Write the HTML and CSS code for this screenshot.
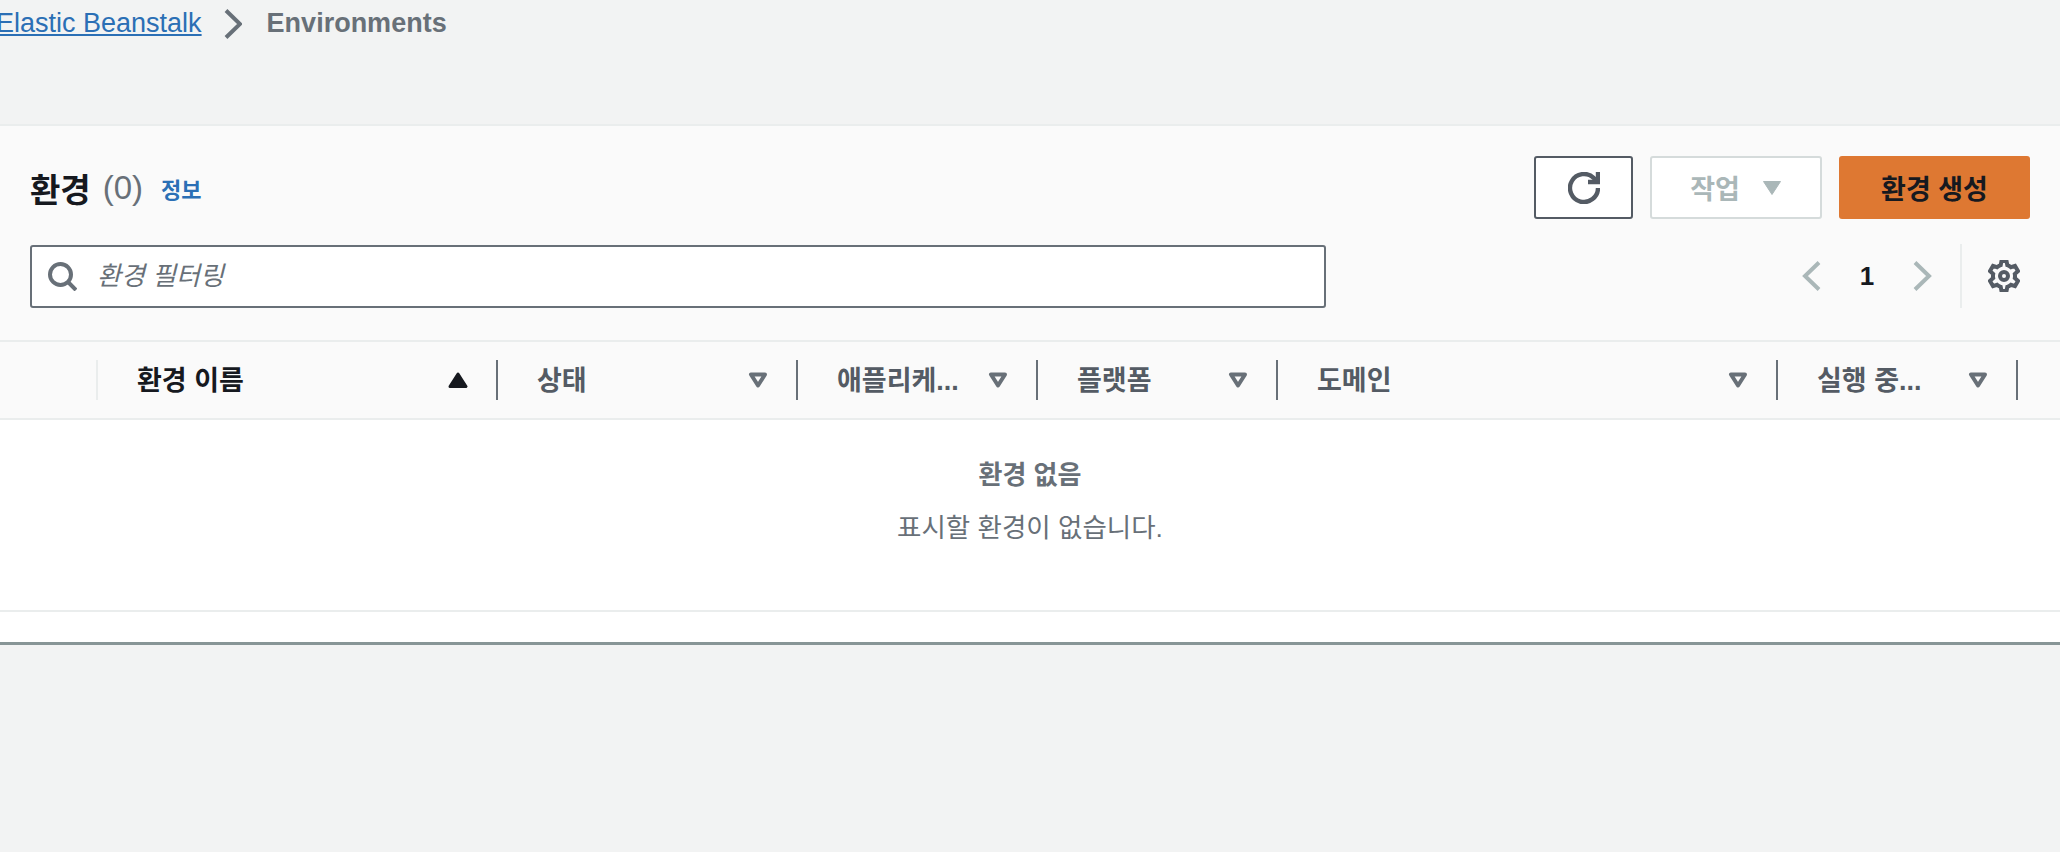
FILE: index.html
```html
<!DOCTYPE html>
<html lang="ko">

<head>
  <meta charset="UTF-8" />
  <meta name="viewport" content="width=device-width, initial-scale=1.0" />
  <title>Environments</title>
  <link rel="stylesheet" href="styles.css">
</head>

<body>
  <nav class="crumbs">
    <a href="javascript:;">Elastic Beanstalk</a>
    <svg class="crumb-arrow" viewBox="0 0 18 30"><path d="M2 1.500 16 15 2 28.500" /></svg>
    <span>Environments</span>
  </nav>

  <section class="panel">
    <div class="panel-head">
      <div class="head-row">
        <h2 class="title">환경 <span class="count">(0)</span> <a class="info" href="javascript:;">정보</a></h2>
        <div class="actions">
          <button class="btn btn-refresh" aria-label="refresh">
            <svg class="refresh-icon" viewBox="0 0 16 16"><path d="M10 5h5V0" /><path d="M15 8a7 7 0 1 1-2.050-4.950L15 5" /></svg>
          </button>
          <button class="btn btn-disabled">작업
            <svg class="caret" viewBox="0 0 20 16"><path d="M1.500 1.500h17L10 14.500z" /></svg>
          </button>
          <button class="btn btn-primary">환경 생성</button>
        </div>
      </div>
      <div class="tools-row">
        <label class="filter">
          <svg class="search-icon" viewBox="0 0 29 29"><circle cx="12.500" cy="12.500" r="10.500" /><path d="M20 20l8 8" /></svg>
          <input type="text" placeholder="환경 필터링" />
        </label>
        <div class="pager">
          <svg class="chevron" viewBox="0 0 19 30"><path d="M17 1.500 3 15l14 13.500" /></svg>
          <span class="page-num">1</span>
          <svg class="chevron" viewBox="0 0 19 30"><path d="M2 1.500 16 15 2 28.500" /></svg>
          <span class="pager-sep"></span>
          <svg class="gear" viewBox="0 0 16 16"><path d="M13.500 8c0-.36-.04-.71-.1-1.050l1.600-1.400-1.500-2.600-2.020.68a5.500 5.500 0 0 0-1.820-1.050L9.250.5h-2.500l-.41 2.080c-.67.24-1.280.6-1.820 1.050l-2.020-.68L1 5.550l1.600 1.400a5.800 5.800 0 0 0 0 2.100L1 10.450l1.500 2.600 2.020-.68c.54.45 1.150.81 1.820 1.050l.41 2.080h2.500l.41-2.080c.67-.24 1.280-.6 1.820-1.050l2.020.68 1.500-2.600-1.600-1.400c.06-.34.1-.69.1-1.050Z" /><circle cx="8" cy="8" r="2" /></svg>
        </div>
      </div>
    </div>

    <div class="thead">
      <div class="th th-blank"></div>
      <div class="th th-sorted">
        <span class="th-text">환경 이름</span>
        <svg class="sort-icon" viewBox="0 0 20 16"><path d="M10 2 18 14.500h-16z" /></svg>
      </div>
      <div class="th">
        <span class="th-text">상태</span>
        <svg class="sort-icon" viewBox="0 0 20 16"><path d="M3 2.500h14L10 13.500z" /></svg>
      </div>
      <div class="th">
        <span class="th-text">애플리케...</span>
        <svg class="sort-icon" viewBox="0 0 20 16"><path d="M3 2.500h14L10 13.500z" /></svg>
      </div>
      <div class="th">
        <span class="th-text">플랫폼</span>
        <svg class="sort-icon" viewBox="0 0 20 16"><path d="M3 2.500h14L10 13.500z" /></svg>
      </div>
      <div class="th">
        <span class="th-text">도메인</span>
        <svg class="sort-icon" viewBox="0 0 20 16"><path d="M3 2.500h14L10 13.500z" /></svg>
      </div>
      <div class="th">
        <span class="th-text">실행 중...</span>
        <svg class="sort-icon" viewBox="0 0 20 16"><path d="M3 2.500h14L10 13.500z" /></svg>
      </div>
    </div>

    <div class="empty">
      <b class="empty-title">환경 없음</b>
      <p class="empty-text">표시할 환경이 없습니다.</p>
    </div>
    <div class="panel-foot"></div>
  </section>
</body>

</html>
```

FILE: styles.css
```css
* {
  margin: 0;
  padding: 0;
  box-sizing: border-box;
}

html,
body {
  height: 100%;
  overflow: hidden;
}

body {
  background: #f2f3f3;
  color: #16191f;
  font-family: "Liberation Sans", "Noto Sans CJK KR", sans-serif;
  font-size: 26px;
}

a {
  color: #2b6fb5;
}

svg {
  display: block;
  flex: none;
}

/* breadcrumb, starts a little off the left edge */
.crumbs {
  height: 124px;
  padding-bottom: 77px;
  margin-left: -4px;
  display: flex;
  align-items: center;
  font-size: 27px;
}

.crumbs a {
  text-decoration-thickness: 2px;
  text-underline-offset: 2px;
}

.crumbs span {
  color: #687078;
  font-weight: bold;
}

.crumb-arrow {
  width: 18px;
  height: 30px;
  margin: 0 25px 0 22px;
}

.crumb-arrow path {
  fill: none;
  stroke: #687078;
  stroke-width: 4;
}

/* panel */
.panel {
  background: #fff;
  border-top: 2px solid #eaeded;
  border-bottom: 3px solid #879596;
}

.panel-head {
  background: #fafafa;
  padding: 30px 30px 32px;
}

.head-row,
.tools-row {
  display: flex;
  justify-content: space-between;
}

.head-row {
  height: 63px;
  align-items: center;
  margin-bottom: 25px;
}

.title {
  font-size: 33px;
  font-weight: bold;
  display: flex;
  align-items: center;
  gap: 12px;
}

.count {
  color: #687078;
  font-weight: normal;
}

.info {
  font-size: 22px;
  font-weight: bold;
  text-decoration: none;
  margin-left: 6px;
}

.actions {
  display: flex;
  gap: 17px;
}

.btn {
  height: 63px;
  font: inherit;
  font-size: 27px;
  font-weight: bold;
  border-radius: 3px;
  display: flex;
  align-items: center;
  justify-content: center;
}

.btn-refresh {
  width: 99px;
  background: #fff;
  border: 2px solid #545b64;
}

.refresh-icon {
  width: 32px;
  height: 32px;
}

.refresh-icon path {
  fill: none;
  stroke: #545b64;
  stroke-width: 2.200;
}

.btn-disabled {
  width: 172px;
  gap: 22px;
  background: #fff;
  border: 2px solid #d5dbdb;
  color: #aab7b8;
}

.caret {
  width: 20px;
  height: 16px;
}

.caret path {
  fill: #aab7b8;
  stroke: #aab7b8;
  stroke-linejoin: round;
}

.btn-primary {
  width: 191px;
  background: #de7832;
  border: 0;
  color: #16191f;
}

/* filter + pagination */
.tools-row {
  height: 64px;
  align-items: center;
}

.filter {
  width: 1296px;
  height: 63px;
  background: #fff;
  border: 2px solid #687078;
  border-radius: 3px;
  display: flex;
  align-items: center;
  padding-left: 16px;
  gap: 20px;
}

.search-icon {
  width: 29px;
  height: 29px;
}

.search-icon circle,
.search-icon path {
  fill: none;
  stroke: #687078;
  stroke-width: 4;
}

.filter input {
  flex: 1;
  border: 0;
  outline: 0;
  background: transparent;
  font: inherit;
  font-style: italic;
}

.filter input::placeholder {
  color: #687078;
  opacity: 1;
}

.pager {
  height: 64px;
  display: flex;
  align-items: center;
  padding-right: 10px;
}

.chevron {
  width: 19px;
  height: 30px;
}

.chevron path {
  fill: none;
  stroke: #aab7b8;
  stroke-width: 4;
}

.page-num {
  width: 92px;
  text-align: center;
  font-weight: bold;
}

.pager-sep {
  width: 2px;
  height: 64px;
  background: #eaeded;
  margin: 0 26px 0 28px;
}

.gear {
  width: 32px;
  height: 32px;
}

.gear path,
.gear circle {
  fill: none;
  stroke: #545b64;
  stroke-width: 2;
}

/* table header */
.thead {
  height: 80px;
  background: #fafafa;
  border-top: 2px solid #eaeded;
  border-bottom: 2px solid #eaeded;
  display: grid;
  grid-template-columns: 98px 400px 300px 240px 240px 500px 240px;
  align-items: center;
}

.th {
  height: 40px;
  border-right: 2px solid #687078;
  padding: 0 28px 0 39px;
  display: flex;
  align-items: center;
  justify-content: space-between;
  color: #545b64;
  font-size: 27px;
  font-weight: bold;
}

.th-blank {
  border-right-color: #eaeded;
}

.th-sorted {
  color: #16191f;
}

.th-text {
  margin-bottom: 4px;
}

.sort-icon {
  width: 20px;
  height: 16px;
}

.sort-icon path {
  fill: none;
  stroke: #687078;
  stroke-width: 4;
  stroke-linejoin: round;
}

.th-sorted .sort-icon path {
  fill: #16191f;
  stroke: #16191f;
  stroke-width: 3;
}

/* empty state */
.empty {
  height: 192px;
  border-bottom: 2px solid #eaeded;
  padding-top: 37px;
  text-align: center;
  color: #687078;
  line-height: 36px;
}

.empty-text {
  margin-top: 17px;
  font-size: 26.500px;
}

.panel-foot {
  height: 30px;
}
```
